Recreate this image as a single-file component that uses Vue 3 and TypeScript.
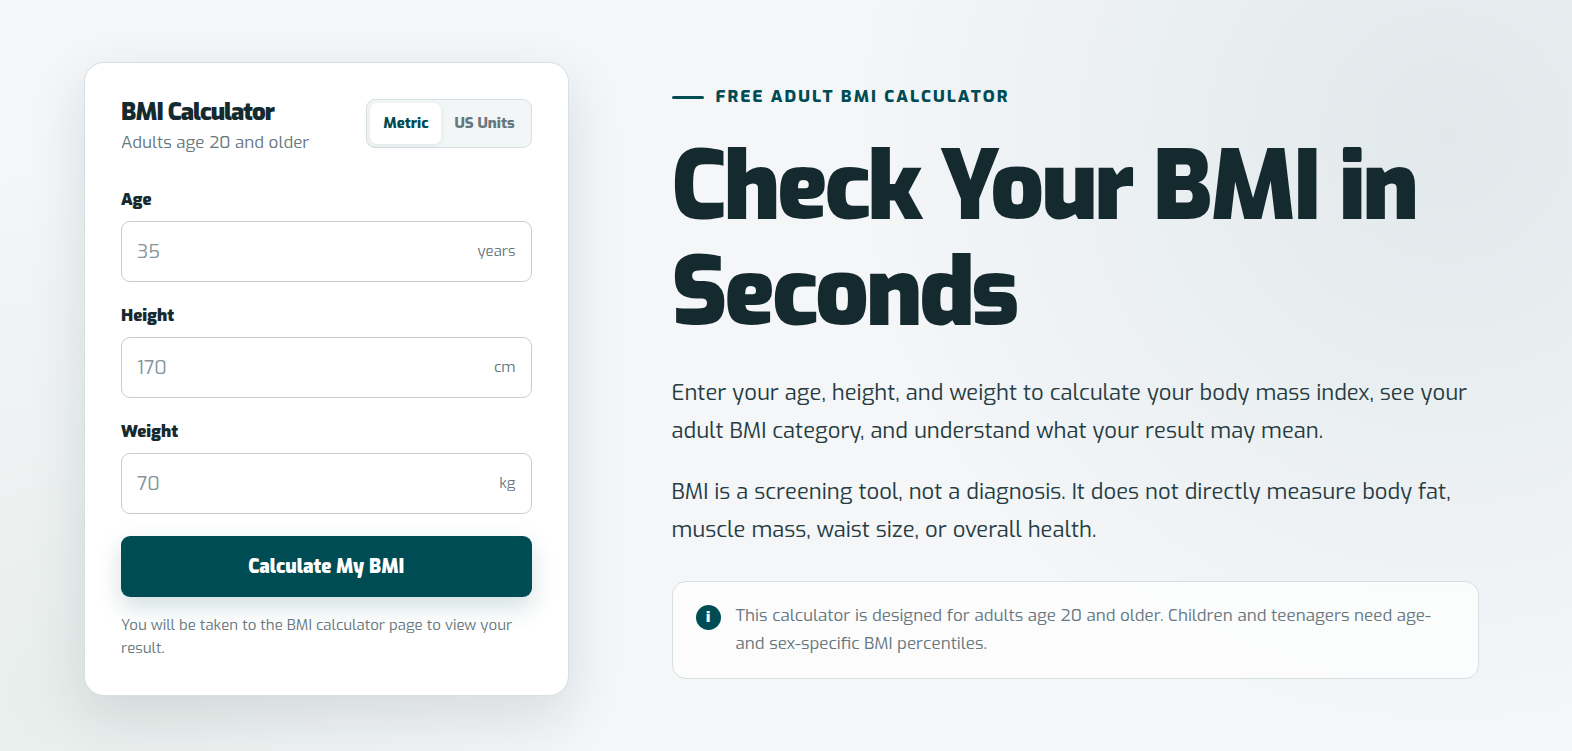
<script setup lang="ts">
import { ref, computed } from 'vue'

type System = 'metric' | 'us'

interface Field {
  id: string
  label: string
  placeholder: string
  unit: string
}

const system = ref<System>('metric')

const systems: { id: System; label: string }[] = [
  { id: 'metric', label: 'Metric' },
  { id: 'us', label: 'US Units' },
]

const fields = computed<Field[]>(() => {
  const metric = system.value === 'metric'
  return [
    { id: 'age', label: 'Age', placeholder: '35', unit: 'years' },
    { id: 'height', label: 'Height', placeholder: metric ? '170' : '67', unit: metric ? 'cm' : 'in' },
    { id: 'weight', label: 'Weight', placeholder: metric ? '70' : '154', unit: metric ? 'kg' : 'lb' },
  ]
})
</script>

<template>
  <main class="hero">
    <form class="card" @submit.prevent>
      <header class="card-head">
        <div>
          <h2 class="card-title">BMI Calculator</h2>
          <p class="card-sub">Adults age 20 and older</p>
        </div>
        <div class="toggle" role="group" aria-label="Units">
          <button
            v-for="s in systems"
            :key="s.id"
            type="button"
            class="toggle-btn"
            :class="{ active: system === s.id }"
            :aria-pressed="system === s.id"
            @click="system = s.id"
          >{{ s.label }}</button>
        </div>
      </header>

      <div v-for="f in fields" :key="f.id" class="field">
        <label class="label" :for="f.id">{{ f.label }}</label>
        <div class="control">
          <input :id="f.id" class="input" type="text" inputmode="decimal" :placeholder="f.placeholder" />
          <span class="unit">{{ f.unit }}</span>
        </div>
      </div>

      <button type="submit" class="submit">Calculate My BMI</button>
      <p class="hint">You will be taken to the BMI calculator page to view your result.</p>
    </form>

    <section class="intro">
      <p class="eyebrow">Free Adult BMI Calculator</p>
      <h1 class="title">Check Your BMI in Seconds</h1>
      <p class="lead">
        Enter your age, height, and weight to calculate your body mass index, see your adult BMI
        category, and understand what your result may mean.
      </p>
      <p class="lead">
        BMI is a screening tool, not a diagnosis. It does not directly measure body fat, muscle
        mass, waist size, or overall health.
      </p>
      <aside class="notice">
        <span class="info" aria-hidden="true">i</span>
        <p class="notice-text">
          This calculator is designed for adults age 20 and older. Children and teenagers need
          age- and sex-specific BMI percentiles.
        </p>
      </aside>
    </section>
  </main>
</template>

<style>
body {
  margin: 0;
}
</style>

<style scoped>
.hero {
  box-sizing: border-box;
  min-height: 100vh;
  display: grid;
  grid-template-columns: 3fr 5fr;
  column-gap: 103px;
  align-items: center;
  padding: 56px 93px 50px 84px;
  font-family: Exo, 'Exo 2', Roboto, 'Open Sans', sans-serif;
  font-weight: 400;
  color: #152a2f;
  background:
    radial-gradient(circle at 92% 18%, rgba(0, 76, 84, 0.08), transparent 38%),
    radial-gradient(circle at 4% 92%, rgba(40, 110, 50, 0.06), transparent 32%),
    #f4f6f8;
}

h1,
h2,
p {
  margin: 0;
}

.card {
  box-sizing: border-box;
  padding: 36px 36px 35px;
  background: #fff;
  border: 1px solid #d6dfe1;
  border-radius: 20px;
  box-shadow: 0 20px 56px rgba(21, 42, 47, 0.12);
}

.card-head {
  display: flex;
  justify-content: space-between;
  align-items: flex-start;
  margin-bottom: 31px;
}

.card-title {
  font-size: 24px;
  line-height: 26px;
  font-weight: 900;
  letter-spacing: -1px;
}

.card-sub {
  margin-top: 4px;
  font-size: 17px;
  line-height: 28px;
  color: #66777d;
}

.toggle {
  display: flex;
  padding: 3px;
  background: #f3f6f7;
  border: 1px solid #d6dfe1;
  border-radius: 9px;
}

.toggle-btn {
  height: 41px;
  padding: 0 13px;
  font: inherit;
  font-size: 15px;
  font-weight: 800;
  color: #66777d;
  background: transparent;
  border: 0;
  border-radius: 7px;
  cursor: pointer;
}

.toggle-btn.active {
  color: #004c54;
  background: #fff;
  box-shadow: 0 2px 6px rgba(21, 42, 47, 0.08);
}

.field {
  margin-bottom: 22px;
}

.label {
  display: block;
  margin-bottom: 9px;
  font-size: 17px;
  line-height: 24px;
  font-weight: 900;
}

.control {
  box-sizing: border-box;
  height: 61px;
  display: flex;
  align-items: center;
  padding: 0 15px;
  background: #fff;
  border: 1px solid #c8cfd2;
  border-radius: 9px;
}

.control:focus-within {
  border-color: #004c54;
}

.input {
  flex: 1;
  min-width: 0;
  padding: 0;
  font: inherit;
  font-size: 19px;
  color: #152a2f;
  background: transparent;
  border: 0;
  outline: 0;
}

.input::placeholder {
  color: #86959a;
  opacity: 1;
}

.unit {
  font-size: 15px;
  line-height: 24px;
  color: #66777d;
}

.submit {
  display: block;
  width: 100%;
  height: 61px;
  font: inherit;
  font-size: 19px;
  font-weight: 900;
  color: #fff;
  background: #004c54;
  border: 0;
  border-radius: 9px;
  box-shadow: 0 10px 24px rgba(0, 76, 84, 0.18);
  cursor: pointer;
}

.hint {
  margin-top: 17px;
  font-size: 15px;
  line-height: 23px;
  color: #66777d;
}

.intro {
  padding-top: 7px;
}

.eyebrow {
  display: flex;
  align-items: center;
  gap: 12px;
  font-size: 17px;
  line-height: 24px;
  font-weight: 800;
  letter-spacing: 2px;
  text-transform: uppercase;
  color: #004c54;
}

.eyebrow::before {
  content: '';
  width: 32px;
  height: 3px;
  border-radius: 2px;
  background: currentColor;
}

.title {
  margin: 26px 0 27px;
  font-size: 94px;
  line-height: 106px;
  font-weight: 900;
  letter-spacing: -3px;
}

.lead {
  margin-bottom: 23px;
  font-size: 22px;
  line-height: 38px;
  color: #263c42;
}

.notice {
  display: flex;
  align-items: flex-start;
  gap: 15px;
  margin-top: 32px;
  padding: 20px 23px;
  background: rgba(255, 255, 255, 0.7);
  border: 1px solid #d6dfe1;
  border-radius: 14px;
}

.info {
  flex: none;
  width: 25px;
  height: 25px;
  margin-top: 3px;
  border-radius: 50%;
  font-size: 15px;
  line-height: 24px;
  font-weight: 900;
  text-align: center;
  color: #fff;
  background: #004c54;
}

.notice-text {
  font-size: 17px;
  line-height: 28px;
  color: #66777d;
}

@media (max-width: 1000px) {
  .hero {
    grid-template-columns: 1fr;
    row-gap: 48px;
    padding: 32px 24px;
  }

  .title {
    font-size: 56px;
    line-height: 64px;
    letter-spacing: -2px;
  }
}
</style>
